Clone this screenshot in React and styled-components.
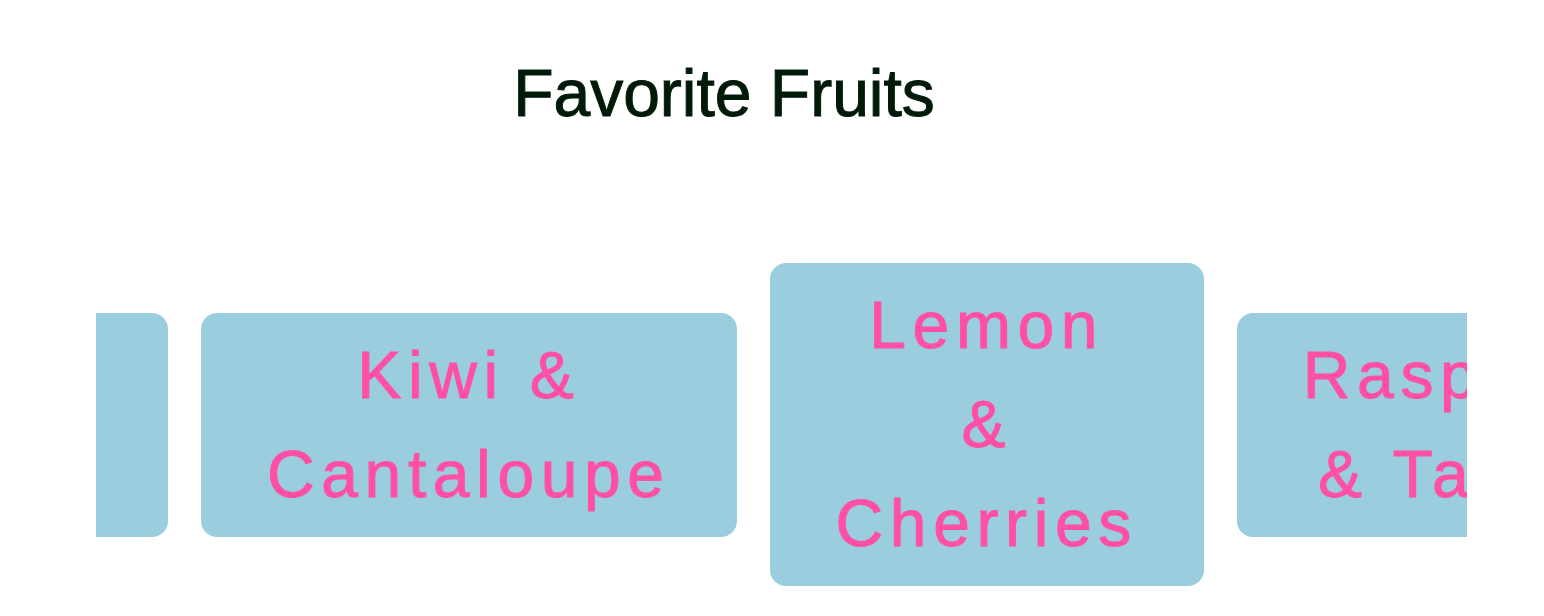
import React from "react";
import styled, { createGlobalStyle } from "styled-components";

const GlobalStyle = createGlobalStyle`
  *, *::before, *::after {
    box-sizing: border-box;
  }

  body {
    margin: 0;
    background: #ffffff;
    font-family: Helvetica, "Liberation Sans", Arial, sans-serif;
    font-size: 66px;
    line-height: 99px;
    -webkit-text-stroke: 1px currentColor;
  }
`;

const Page = styled.main`
  display: flex;
  flex-direction: column;
  gap: 120px;
  padding-top: 44px;
  overflow: hidden;
`;

const Title = styled.h1`
  margin: 0;
  padding-right: 96px;
  color: #001a09;
  font-size: inherit;
  font-weight: 400;
  text-align: center;
`;

const Carousel = styled.ul`
  display: flex;
  align-items: center;
  gap: 33px;
  margin: 0 77px 0 96px;
  padding: 0;
  overflow: hidden;
  list-style: none;
`;

const Card = styled.li`
  flex: none;
  padding: 13px 66px;
  border-radius: 16px;
  background: #9acede;
  color: #ff50a5;
  letter-spacing: 0.1em;
  text-align: center;
  white-space: pre-line;
`;

const CardEdge = styled.li`
  flex: none;
  width: 72px;
  height: 224px;
  border-radius: 0 16px 16px 0;
  background: #9acede;
`;

const fruits = ["Kiwi &\nCantaloupe", "Lemon\n&\nCherries", "Raspberries\n& Tamarillo"];

export default function App() {
  return (
    <>
      <GlobalStyle />
      <Page>
        <Title>Favorite Fruits</Title>
        <Carousel>
          <CardEdge aria-hidden="true" />
          {fruits.map((name) => (
            <Card key={name}>{name}</Card>
          ))}
        </Carousel>
      </Page>
    </>
  );
}
